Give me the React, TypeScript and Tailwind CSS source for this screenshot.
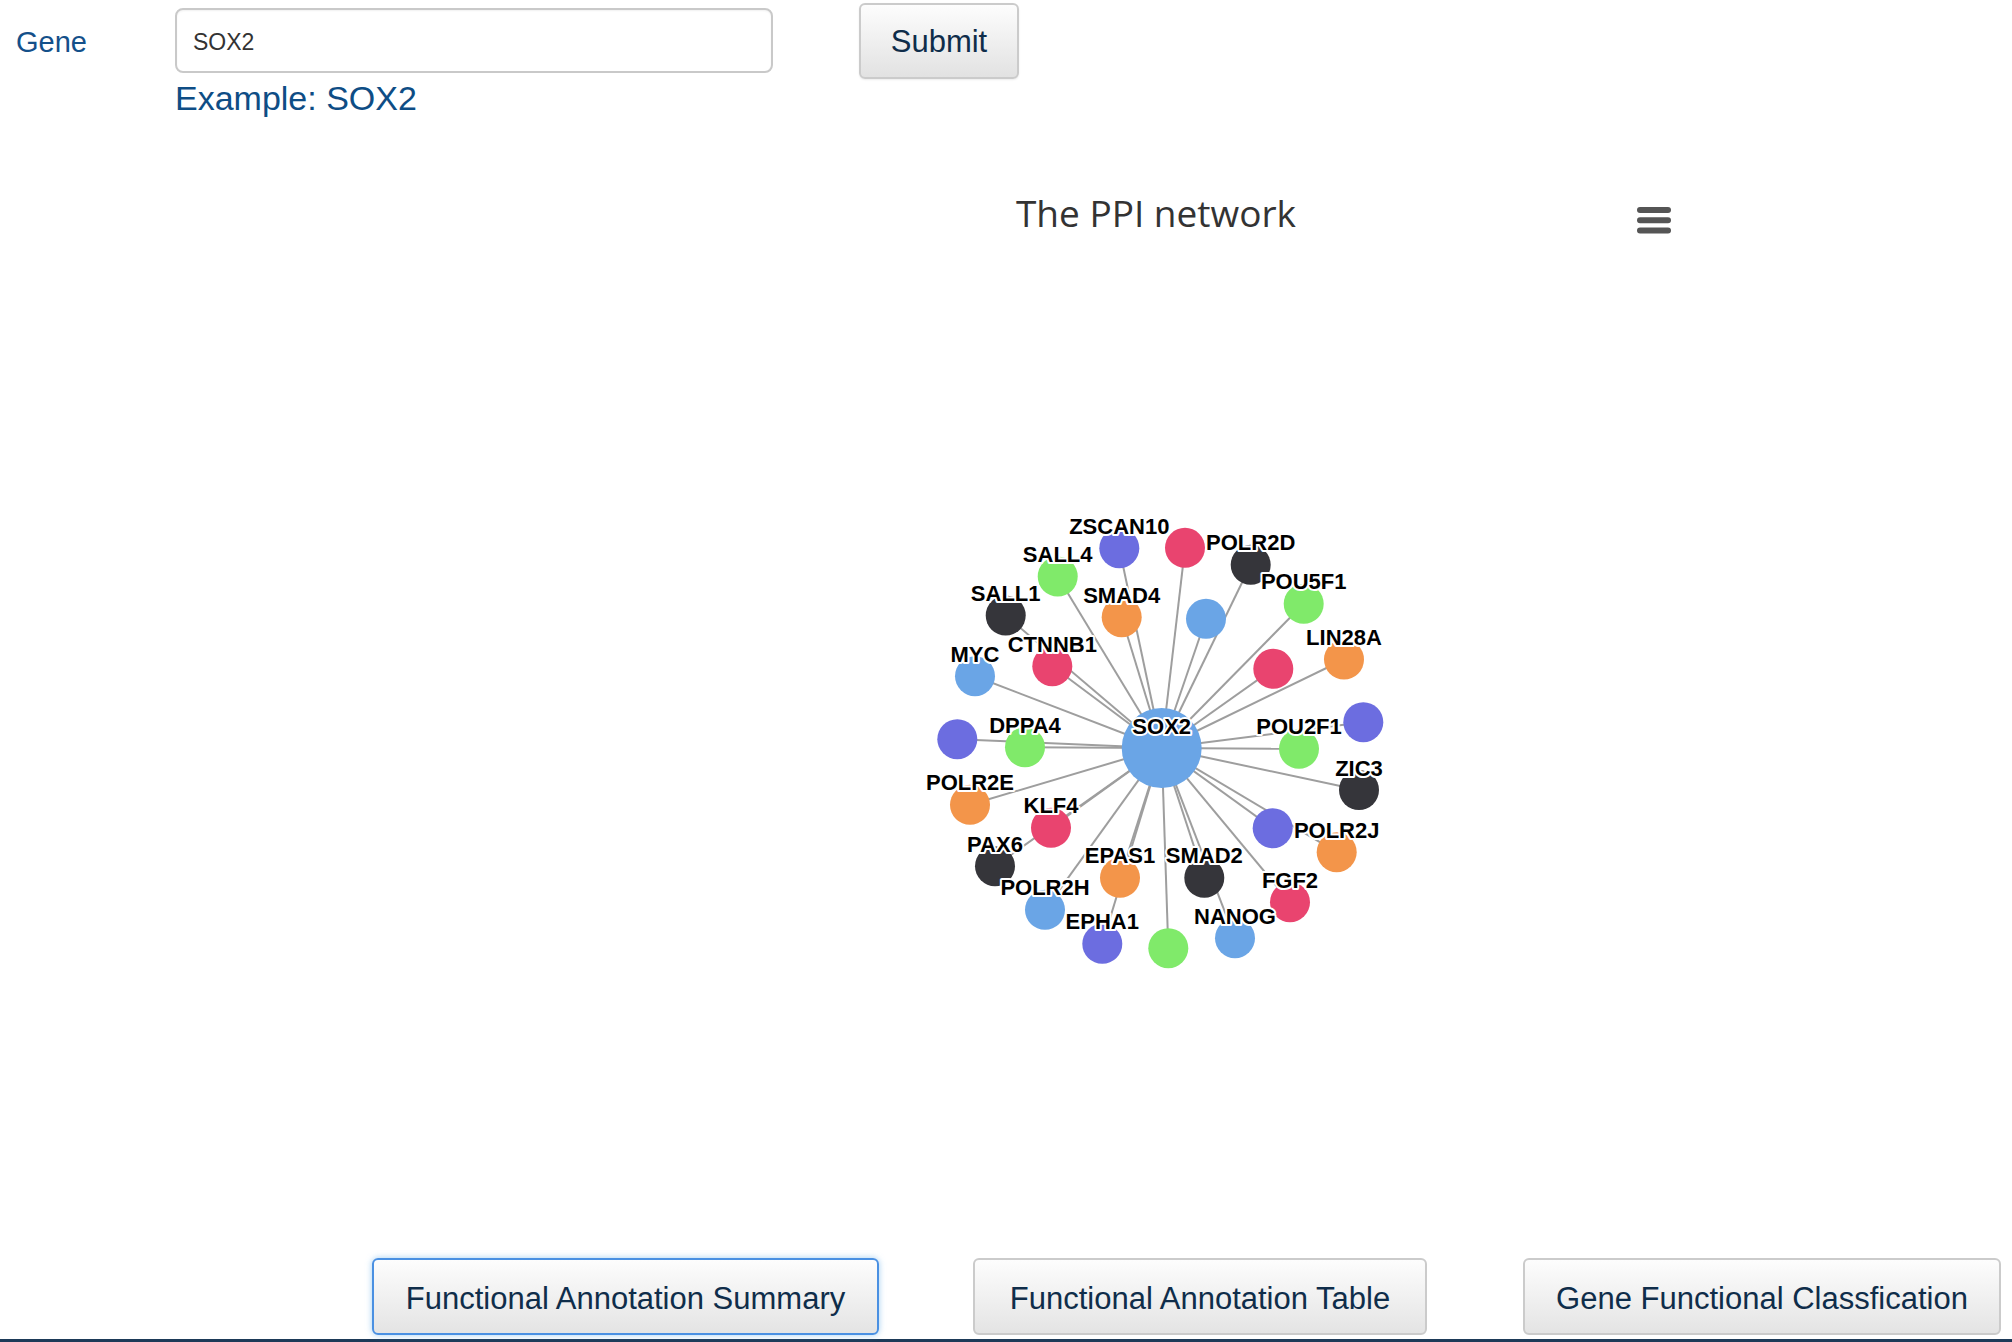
import React from "react";

type GeneNode = {
  id: string;
  x: number;
  y: number;
  color: string;
  label?: boolean;
};

const BLUE = "#6aa5e6";
const DARK = "#35353a";
const GREEN = "#80ea6a";
const ORANGE = "#f3954a";
const PURPLE = "#6c6de0";
const RED = "#e9446f";

const center = { x: 1161.7, y: 747.5 };

// positions in page coordinates (the svg viewBox starts at the chart origin)
const nodes: GeneNode[] = [
  { id: "ZSCAN10", x: 1119.3, y: 547.7, color: PURPLE, label: true },
  { id: "n2", x: 1185, y: 547.3, color: RED },
  { id: "POLR2D", x: 1250.7, y: 564.3, color: DARK, label: true },
  { id: "SALL4", x: 1057.7, y: 576, color: GREEN, label: true },
  { id: "SALL1", x: 1005.7, y: 615, color: DARK, label: true },
  { id: "SMAD4", x: 1121.7, y: 616.7, color: ORANGE, label: true },
  { id: "n7", x: 1206, y: 618.3, color: BLUE },
  { id: "POU5F1", x: 1303.7, y: 603.3, color: GREEN, label: true },
  { id: "CTNNB1", x: 1052.3, y: 665.7, color: RED, label: true },
  { id: "MYC", x: 975, y: 675.7, color: BLUE, label: true },
  { id: "n11", x: 1273.3, y: 668.3, color: RED },
  { id: "LIN28A", x: 1344, y: 659, color: ORANGE, label: true },
  { id: "DPPA4", x: 1025, y: 746.7, color: GREEN, label: true },
  { id: "n14", x: 957.3, y: 738.7, color: PURPLE },
  { id: "POU2F1", x: 1299, y: 748.3, color: GREEN, label: true },
  { id: "n16", x: 1363.3, y: 721.7, color: PURPLE },
  { id: "ZIC3", x: 1359, y: 789.5, color: DARK, label: true },
  { id: "POLR2E", x: 970, y: 804.3, color: ORANGE, label: true },
  { id: "KLF4", x: 1051, y: 827.3, color: RED, label: true },
  { id: "n20", x: 1272.7, y: 827.7, color: PURPLE },
  { id: "POLR2J", x: 1336.7, y: 851.7, color: ORANGE, label: true },
  { id: "PAX6", x: 995, y: 865.7, color: DARK, label: true },
  { id: "EPAS1", x: 1120, y: 877.3, color: ORANGE, label: true },
  { id: "SMAD2", x: 1204.3, y: 877.3, color: DARK, label: true },
  { id: "FGF2", x: 1290, y: 901.7, color: RED, label: true },
  { id: "POLR2H", x: 1045, y: 909.3, color: BLUE, label: true },
  { id: "NANOG", x: 1235, y: 937.7, color: BLUE, label: true },
  { id: "EPHA1", x: 1102.3, y: 943.3, color: PURPLE, label: true },
  { id: "n29", x: 1168.3, y: 947.7, color: GREEN },
];

function NodeLabel({ x, y, text }: { x: number; y: number; text: string }) {
  return (
    <text
      x={x}
      y={y - 14.5}
      textAnchor="middle"
      fontFamily='"Liberation Sans", Arial, sans-serif'
      fontWeight="bold"
      fontSize={22}
      fill="#000"
      stroke="#fff"
      strokeWidth={4}
      strokeLinejoin="round"
      paintOrder="stroke"
    >
      {text}
    </text>
  );
}

function PpiNetwork() {
  return (
    <svg width={1060} height={1020} viewBox="626 237.5 1060 1020" className="block">
      <g stroke="#9e9e9e" strokeWidth={2}>
        {nodes.map((n) => (
          <line key={n.id} x1={center.x} y1={center.y} x2={n.x} y2={n.y} />
        ))}
      </g>
      {nodes.map((n) => (
        <circle key={n.id} cx={n.x} cy={n.y} r={20} fill={n.color} />
      ))}
      <circle cx={center.x} cy={center.y} r={40} fill={BLUE} />
      {nodes
        .filter((n) => n.label)
        .map((n) => (
          <NodeLabel key={n.id} x={n.x} y={n.y} text={n.id} />
        ))}
      <NodeLabel x={center.x} y={center.y} text="SOX2" />
    </svg>
  );
}

const btnBase =
  "h-[77px] pt-[5px] rounded-[6px] border-2 bg-gradient-to-b from-[#fdfdfd] to-[#e4e4e4] text-[31px] text-[#0f2d4a] flex items-center justify-center";

export default function App() {
  return (
    <div className="bg-white min-h-[1342px] font-['Liberation_Sans',Arial,sans-serif]">
      {/* search form */}
      <div className="flex items-start pt-[3px]">
        <div className="w-[175px] pl-4 mt-[23px] text-[29px] leading-[33px] text-[#14508a]">
          Gene
        </div>
        <div className="w-[598px]">
          <input
            defaultValue="SOX2"
            className="mt-[5px] h-[65px] w-full rounded-[8px] border-2 border-[#c9c9c9] pl-4 pt-[3px] text-[23px] text-[#333] outline-none shadow-[inset_0_1px_2px_rgba(0,0,0,0.06)]"
          />
          <div className="mt-[6px] text-[34px] leading-[39px] text-[#0e4d85]">
            Example: SOX2
          </div>
        </div>
        <button className="ml-[86px] h-[76px] w-[160px] pt-[3px] rounded-[6px] border-2 border-[#cbcbcb] bg-gradient-to-b from-[#fdfdfd] to-[#e2e2e2] text-[31px] text-[#0f2d4a] shadow-[0_1px_2px_rgba(0,0,0,0.08)]">
          Submit
        </button>
      </div>

      {/* chart */}
      <div className="relative ml-[626px] mt-[71px] w-[1060px]">
        <div className="-mt-[1px] mb-[1px] text-center font-['Open_Sans',sans-serif] text-[37px] leading-[49px] text-[#333]">
          The PPI network
        </div>
        <div className="absolute left-[1011px] top-[19px]">
          <svg width={34} height={30} viewBox="0 0 34 30">
            <g stroke="#555" strokeWidth={6} strokeLinecap="round">
              <line x1={3} y1={3} x2={31} y2={3} />
              <line x1={3} y1={13.3} x2={31} y2={13.3} />
              <line x1={3} y1={23.6} x2={31} y2={23.6} />
            </g>
          </svg>
        </div>
        <PpiNetwork />
      </div>

      {/* result buttons */}
      <div className="flex">
        <button
          className={`${btnBase} ml-[372px] w-[507px] border-[#4a90e2] shadow-[0_0_6px_rgba(102,175,233,0.6)]`}
        >
          Functional Annotation Summary
        </button>
        <button className={`${btnBase} ml-[94px] w-[454px] border-[#cbcbcb]`}>
          Functional Annotation Table
        </button>
        <button className={`${btnBase} ml-[96px] w-[478px] border-[#cbcbcb]`}>
          Gene Functional Classfication
        </button>
      </div>
      <div className="mt-[4px] h-[3px] bg-[#1d3a58]" />
    </div>
  );
}
